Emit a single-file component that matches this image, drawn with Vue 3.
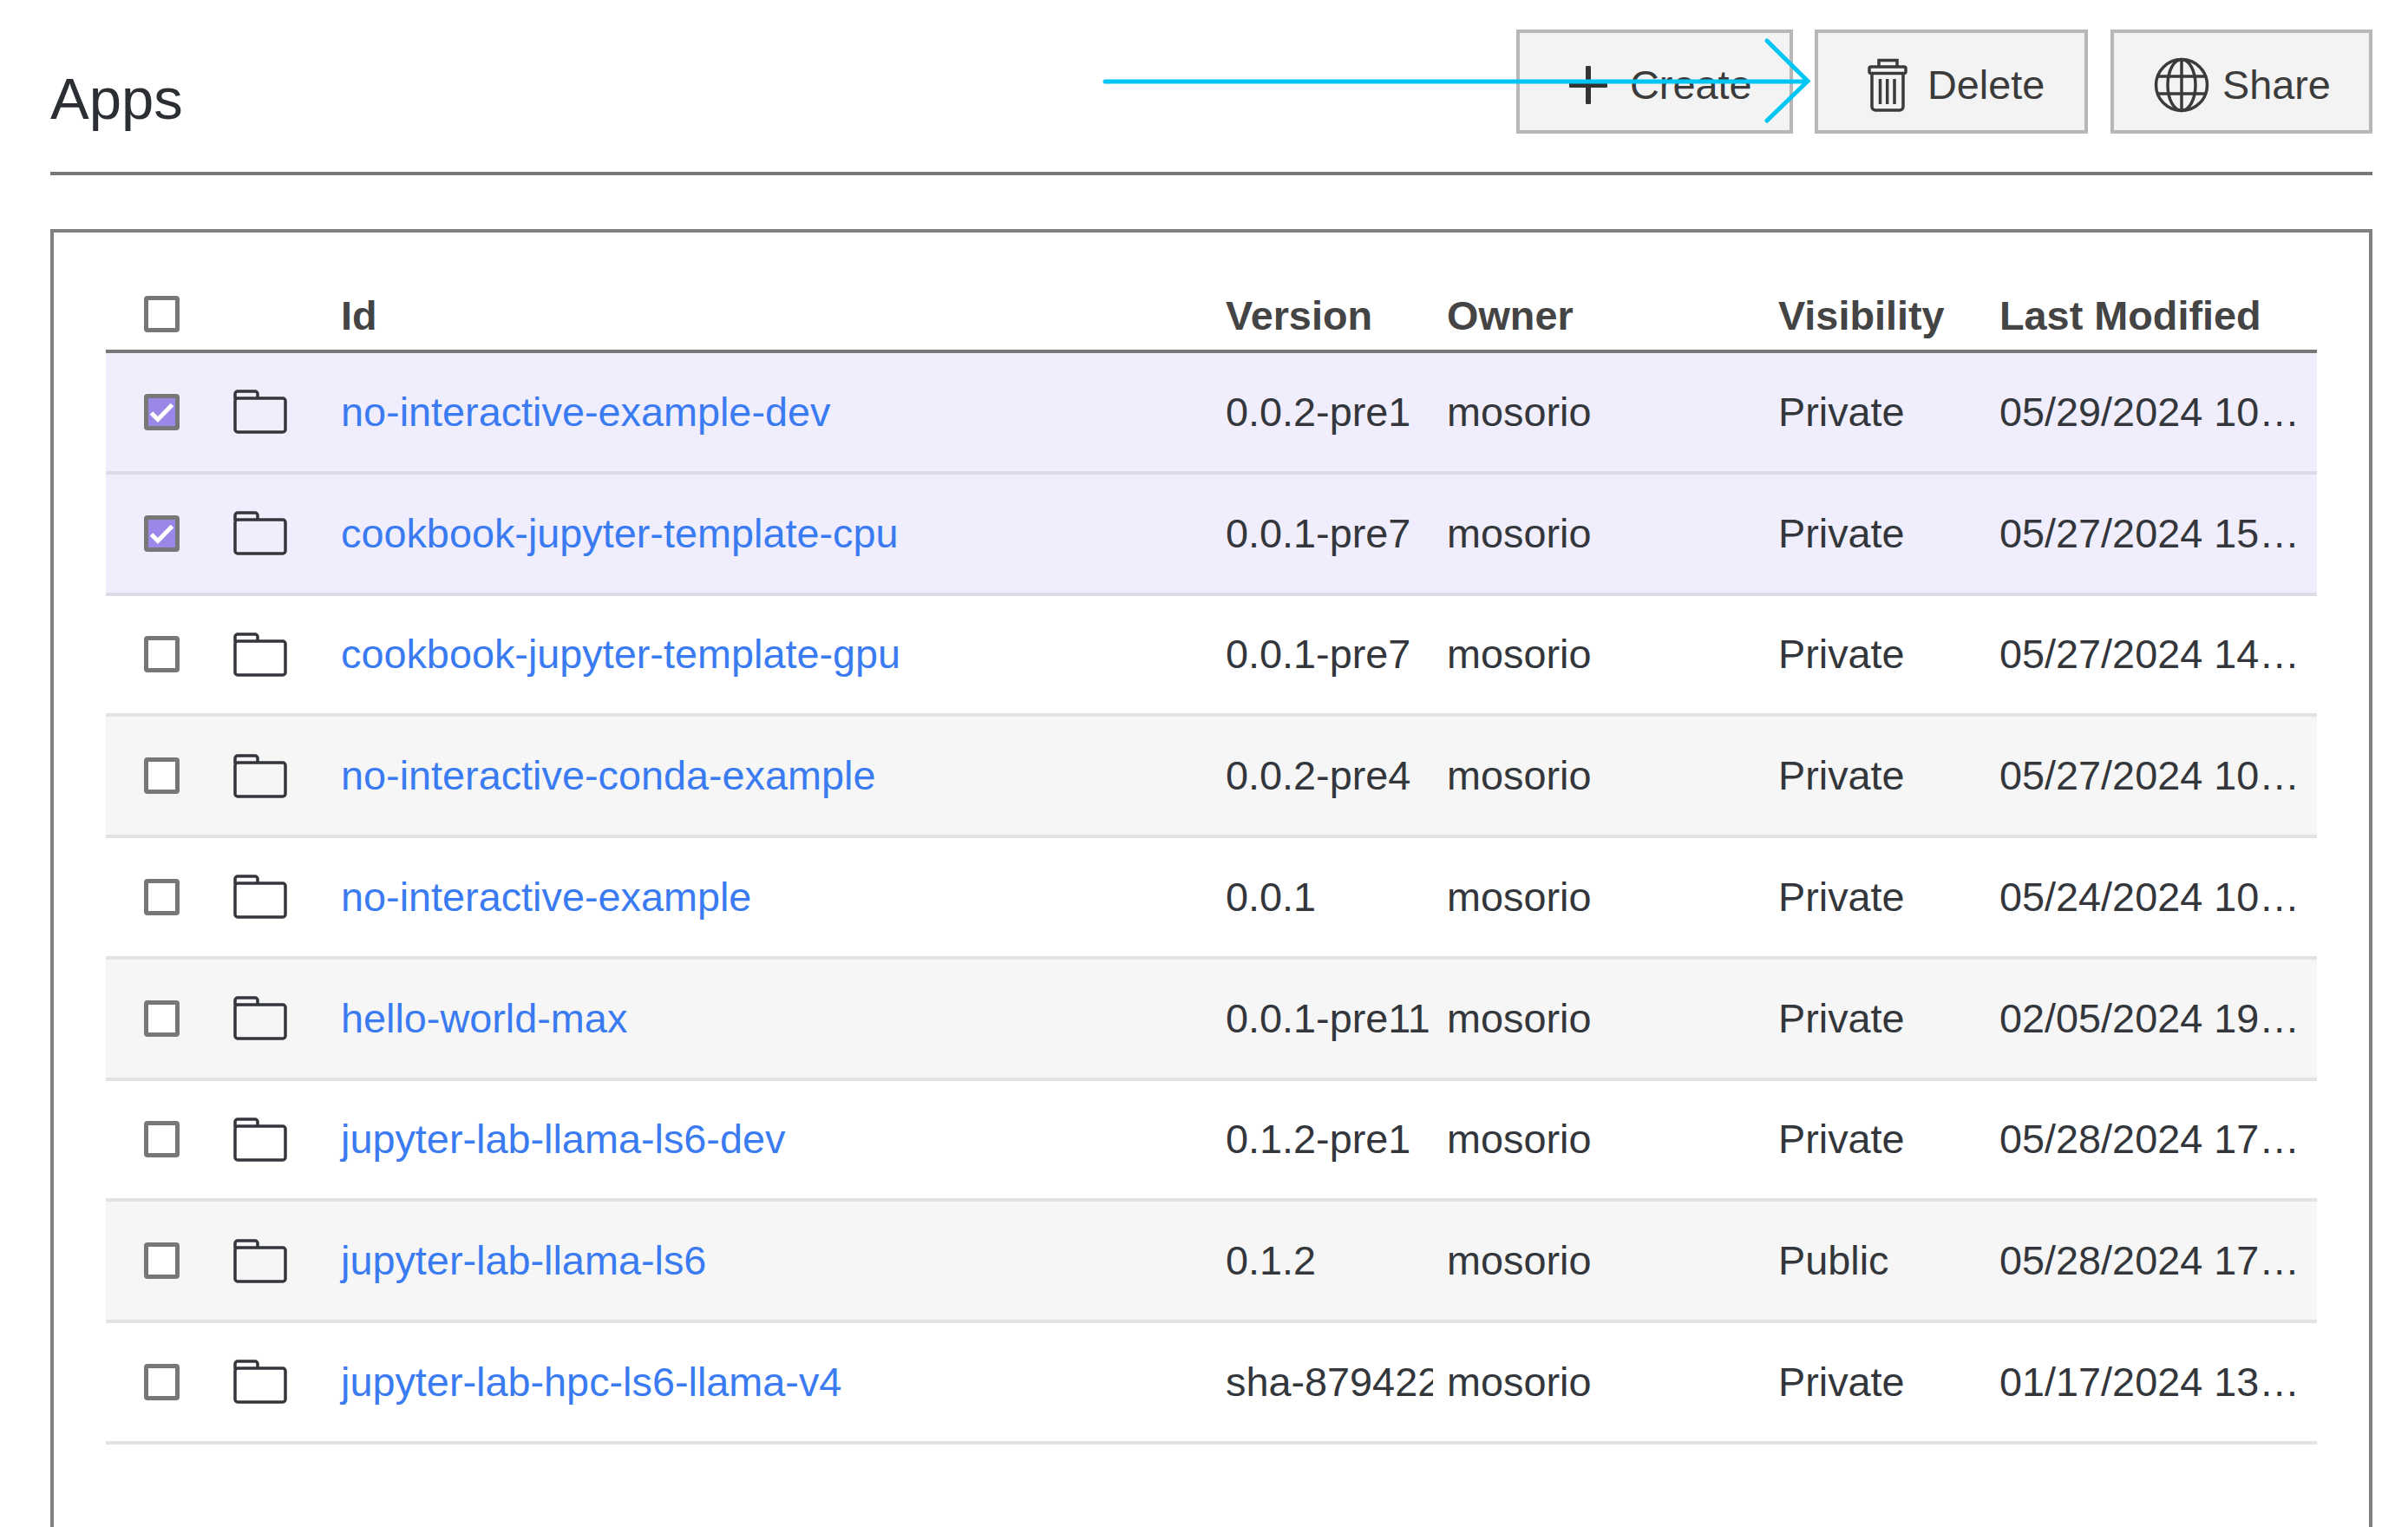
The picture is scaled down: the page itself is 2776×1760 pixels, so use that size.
<script setup>
const apps = [
  { id: 'no-interactive-example-dev', version: '0.0.2-pre1', visibility: 'Private', modified: '05/29/2024 10…', selected: true },
  { id: 'cookbook-jupyter-template-cpu', version: '0.0.1-pre7', visibility: 'Private', modified: '05/27/2024 15…', selected: true },
  { id: 'cookbook-jupyter-template-gpu', version: '0.0.1-pre7', visibility: 'Private', modified: '05/27/2024 14…' },
  { id: 'no-interactive-conda-example', version: '0.0.2-pre4', visibility: 'Private', modified: '05/27/2024 10…' },
  { id: 'no-interactive-example', version: '0.0.1', visibility: 'Private', modified: '05/24/2024 10…' },
  { id: 'hello-world-max', version: '0.0.1-pre11', visibility: 'Private', modified: '02/05/2024 19…' },
  { id: 'jupyter-lab-llama-ls6-dev', version: '0.1.2-pre1', visibility: 'Private', modified: '05/28/2024 17…' },
  { id: 'jupyter-lab-llama-ls6', version: '0.1.2', visibility: 'Public', modified: '05/28/2024 17…' },
  { id: 'jupyter-lab-hpc-ls6-llama-v4', version: 'sha-879422', visibility: 'Private', modified: '01/17/2024 13…' }
]
</script>

<template>
  <div class="page">
    <header class="toolbar">
      <h1>Apps</h1>
      <div class="actions">
        <button class="btn btn-create">
          <svg width="44" height="44" viewBox="0 0 44 44"><path d="M22 2V42M2 22H42" fill="none" stroke="#333" stroke-width="6" stroke-linecap="round" /></svg>
          Create
        </button>
        <button class="btn btn-delete">
          <svg width="48" height="62" viewBox="20 17 48 62" fill="none" stroke="#3b3b3b" stroke-width="3.5">
            <path d="M34 26V19.500H55V26" />
            <rect x="23" y="27" width="42" height="7.500" rx="2" />
            <path d="M26 35V73a4 4 0 0 0 4 4H58a4 4 0 0 0 4-4V35" />
            <path d="M35.500 41V70M43.700 41V70M52 41V70" />
          </svg>
          Delete
        </button>
        <button class="btn btn-share">
          <svg width="64" height="64" viewBox="16 16 64 64" fill="none" stroke="#3b3b3b" stroke-width="3.500">
            <circle cx="48" cy="48" r="29.500" />
            <ellipse cx="48" cy="48" rx="16" ry="29.500" />
            <path d="M48 18.500V77.500M21 38H75M21 58H75" />
          </svg>
          Share
        </button>
      </div>
    </header>

    <section class="panel">
      <div class="row head">
        <div class="cell-check"><span class="check"></span></div>
        <div></div>
        <div>Id</div>
        <div>Version</div>
        <div>Owner</div>
        <div>Visibility</div>
        <div>Last Modified</div>
      </div>
      <div v-for="(app, i) in apps" :key="app.id" class="row item" :class="{ selected: app.selected, zebra: i % 2 === 1 }">
        <div class="cell-check">
          <span class="check" :class="{ on: app.selected }">
            <svg v-if="app.selected" width="31" height="32" viewBox="0 0 31 32"><path d="M3.500 17L11 24.500L27.500 7.500" fill="none" stroke="#fff" stroke-width="5" /></svg>
          </span>
        </div>
        <div class="cell-folder">
          <svg width="62" height="51" viewBox="0 0 62 51" fill="none" stroke="#33363b" stroke-width="3.500">
            <rect x="2" y="10" width="58" height="39" rx="3" />
            <path d="M2 11V5a3 3 0 0 1 3-3H25a3 3 0 0 1 3 3V10" />
          </svg>
        </div>
        <a class="link">{{ app.id }}</a>
        <div class="clip">{{ app.version }}</div>
        <div>mosorio</div>
        <div>{{ app.visibility }}</div>
        <div>{{ app.modified }}</div>
      </div>
    </section>

    <svg class="arrow" width="830" height="110" viewBox="1270 40 830 110" fill="none" stroke="#00c6f3" stroke-width="5" stroke-linecap="round">
      <path d="M1274 94H2083" />
      <path d="M2037 47L2084 93.500L2037 139" />
    </svg>
  </div>
</template>

<style scoped>
.page {
  position: relative;
  box-sizing: border-box;
  width: 2776px;
  height: 1760px;
  padding: 0 41px 0 58px;
  overflow: hidden;
  background: #fff;
  color: #33363b;
  font-family: "Liberation Sans", Arial, sans-serif;
  font-size: 46.8px;
}

.toolbar {
  box-sizing: border-box;
  height: 202px;
  padding-top: 34px;
  display: flex;
  justify-content: space-between;
  align-items: flex-start;
  border-bottom: 4px solid #777;
}

h1 {
  margin: 40px 0 0;
  font-size: 67px;
  font-weight: 400;
  line-height: 1.2;
  color: #2b2e33;
}

.actions {
  display: flex;
  gap: 25px;
}

.btn {
  box-sizing: border-box;
  height: 120px;
  display: flex;
  align-items: center;
  gap: 26px;
  padding: 7px 0 0;
  background: #f3f3f3;
  border: 4px solid #b7b7b7;
  color: #3b3b3b;
  font: inherit;
}

.btn-create {
  width: 319px;
  padding-left: 57px;
}

.btn-delete {
  width: 315px;
  margin-right: 1px;
  padding-left: 56px;
  gap: 22px;
}

.btn-share {
  width: 302px;
  padding-left: 46px;
  gap: 15px;
}

.panel {
  box-sizing: border-box;
  height: 1496px;
  margin-top: 62px;
  padding: 0 60px;
  border: 4px solid #808080;
  border-bottom: none;
}

.row {
  box-sizing: border-box;
  display: grid;
  grid-template-columns: 147px 124px 1020px 255px 382px 255px 366px;
  align-items: center;
  white-space: nowrap;
}

.head {
  height: 139px;
  padding-top: 52px;
  border-bottom: 4px solid #777;
  font-weight: 700;
  color: #444;
}

.head > div:not(.cell-check) {
  padding-top: 4px;
}

.item {
  height: 139.75px;
  border-bottom: 4px solid #e3e3e3;
}

.zebra {
  background: #f6f6f6;
}

.selected {
  background: #f0eefc;
  border-bottom-color: #dcdbe8;
}

.cell-check {
  padding-left: 44px;
  display: flex;
}

.check {
  box-sizing: border-box;
  width: 41px;
  height: 42px;
  display: block;
  background: #fff;
  border: 5px solid #777;
  border-radius: 4px;
}

.check.on {
  background: #9b87e8;
}

.check svg,
.cell-folder svg {
  display: block;
}

.link {
  color: #3a7bf2;
}

.clip {
  width: 239px;
  overflow: hidden;
}

.arrow {
  position: absolute;
  left: 1270px;
  top: 40px;
}
</style>
